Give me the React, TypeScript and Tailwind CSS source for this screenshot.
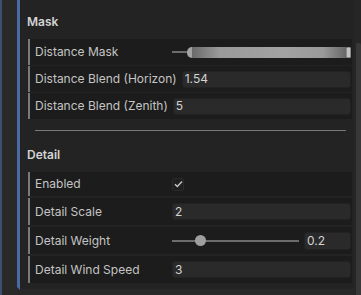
import React from "react";

const font = { fontFamily: "Inter, 'Noto Sans', sans-serif" };

function Row({ label, h, children }: { label: string; h: string; children?: React.ReactNode }) {
  return (
    <div className={`flex items-center bg-[#1c1c1c] ${h} mr-[2px]`}>
      <div className="w-[2px] self-stretch bg-[#7a7a7a]" />
      <div className="pl-[5px] min-w-[137px] shrink-0 whitespace-nowrap text-[12px] leading-[16px] text-[#c4c4c4]">
        {label}
      </div>
      <div className="ml-[5px] flex-1 flex items-center pr-[1px] h-full">{children}</div>
    </div>
  );
}

function Field({ value, className = "" }: { value: string; className?: string }) {
  return (
    <div
      className={`h-[17px] rounded-[3px] bg-[#2a2a2a] border border-[#222222] flex items-center pl-[2px] text-[12px] leading-[16px] text-[#d2d2d2] ${className}`}
    >
      {value}
    </div>
  );
}

export default function App() {
  return (
    <div className="w-[361px] h-[295px] bg-[#282828] flex overflow-hidden" style={font}>
      <div className="w-[2px] h-full bg-[#3d4f70]" />
      <div className="w-[15px] h-full bg-[#292929]" />
      <div className="w-[3px] h-[290px] bg-[#4b6aa4] [clip-path:polygon(0_0,100%_0,100%_100%,0_calc(100%-3px))]" />
      <div className="w-[334px] h-[289px] bg-[#232323] flex flex-col pl-[8px]">
        <div className="pt-[14px] h-[39px] pl-[-1px] text-[12px] leading-[16px] font-semibold text-[#d4d4d4] -ml-[1px]">
          Mask
        </div>
        <div className="flex flex-col gap-[1px]">
          <Row label="Distance Mask" h="h-[26px]">
            <div className="flex-1 flex items-center h-full">
              <div className="w-[15px] h-[2px] bg-[#6c6c6c]" />
              <div className="w-[5px] h-[11px] rounded-l-[5px] bg-[#a4a4a4]" />
              <div className="flex-1 h-[11px] bg-[linear-gradient(to_right,#6a6a6a_0%,#9a9a9a_18%,#a2a2a2_60%,#9a9a9a_85%,#686868_100%)]" />
              <div className="w-[5px] h-[11px] rounded-[1px] bg-[#c2c2c2] border border-[#8a8a8a]" />
            </div>
          </Row>
          <Row label="Distance Blend (Horizon)" h="h-[26px]">
            <Field value="1.54" className="flex-1" />
          </Row>
          <Row label="Distance Blend (Zenith)" h="h-[26px]">
            <Field value="5" className="flex-1" />
          </Row>
        </div>
        <div className="mt-[11px] ml-[7px] mr-[8px] h-[1px] bg-[#7a7a7a]" />
        <div className="pt-[16px] h-[41px] text-[12px] leading-[16px] font-semibold text-[#d4d4d4] -ml-[1px]">
          Detail
        </div>
        <div className="flex flex-col gap-[2px]">
          <Row label="Enabled" h="h-[24px]">
            <div className="w-[12px] h-[13px] rounded-[2px] bg-[#1f1f1f] border border-[#2a2a2a] flex items-center justify-center">
              <svg width="9" height="8" viewBox="0 0 9 8">
                <path d="M1 4.2 L3.3 6.4 L8 1.5" fill="none" stroke="#c8c8c8" strokeWidth="1.4" />
              </svg>
            </div>
          </Row>
          <Row label="Detail Scale" h="h-[27px]">
            <Field value="2" className="flex-1" />
          </Row>
          <Row label="Detail Weight" h="h-[27px]">
            <div className="flex-1 flex items-center h-full">
              <div className="relative w-[127px] h-[2px] bg-[#6c6c6c]">
                <div className="absolute left-[23px] -top-[5px] w-[11px] h-[11px] rounded-full bg-[#9e9e9e]" />
              </div>
              <Field value="0.2" className="ml-[5px] flex-1 h-[18px]" />
            </div>
          </Row>
          <Row label="Detail Wind Speed" h="h-[27px]">
            <Field value="3" className="flex-1" />
          </Row>
        </div>
      </div>
      <div className="flex-1 h-full flex flex-col bg-[#262626]">
        <div className="h-[43px]" />
        <div className="flex-1 ml-[2px] rounded-t-[2px] bg-[#383838]" />
      </div>
    </div>
  );
}
